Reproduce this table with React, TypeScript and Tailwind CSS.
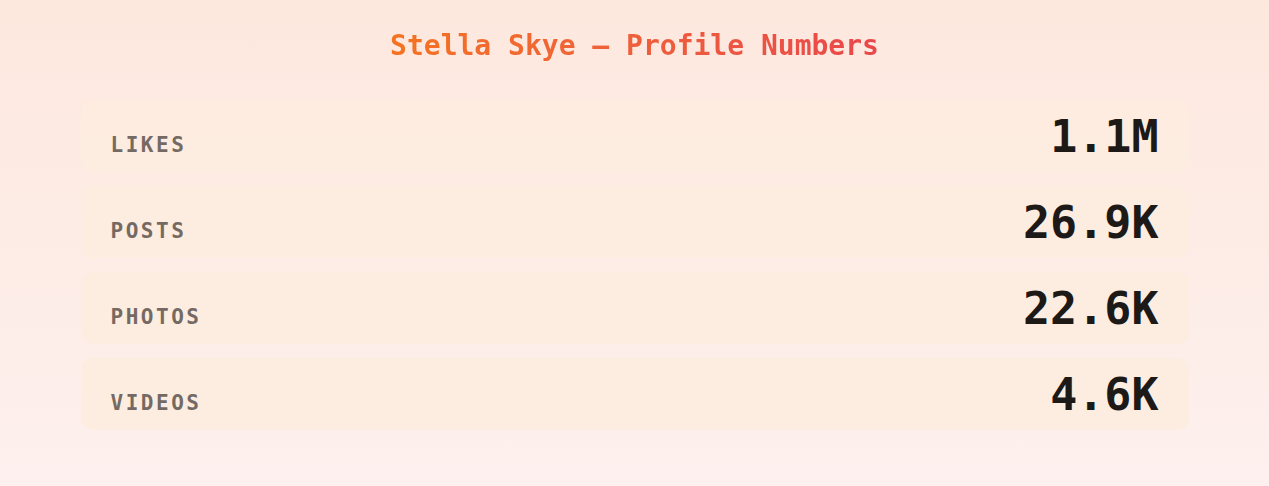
const stats = [
  { label: 'LIKES', value: '1.1M' },
  { label: 'POSTS', value: '26.9K' },
  { label: 'PHOTOS', value: '22.6K' },
  { label: 'VIDEOS', value: '4.6K' },
]

export default function App() {
  return (
    <div className="min-h-[486px] w-full bg-gradient-to-b from-[#fde8de] to-[#fdf0ee] font-['DejaVu_Sans_Mono',monospace]">
      <div className="mx-auto w-[1108px] pt-[32px]">
        <h1 className="text-center text-[28px] font-bold leading-none">
          <span className="bg-gradient-to-r from-[#f47320] to-[#e9474a] bg-clip-text text-transparent">
            Stella Skye — Profile Numbers
          </span>
        </h1>
        <div className="mt-[40px] flex flex-col gap-[14px]">
          {stats.map((s) => (
            <div
              key={s.label}
              className="flex h-[72px] items-baseline justify-between rounded-xl bg-[#fdecdf]/80 px-[30px] pt-[14px]"
            >
              <span className="text-[21px] font-bold leading-none tracking-[0.12em] text-[#756a63]">{s.label}</span>
              <span className="text-[45px] font-bold leading-none text-[#1c1917]">{s.value}</span>
            </div>
          ))}
        </div>
      </div>
    </div>
  )
}
